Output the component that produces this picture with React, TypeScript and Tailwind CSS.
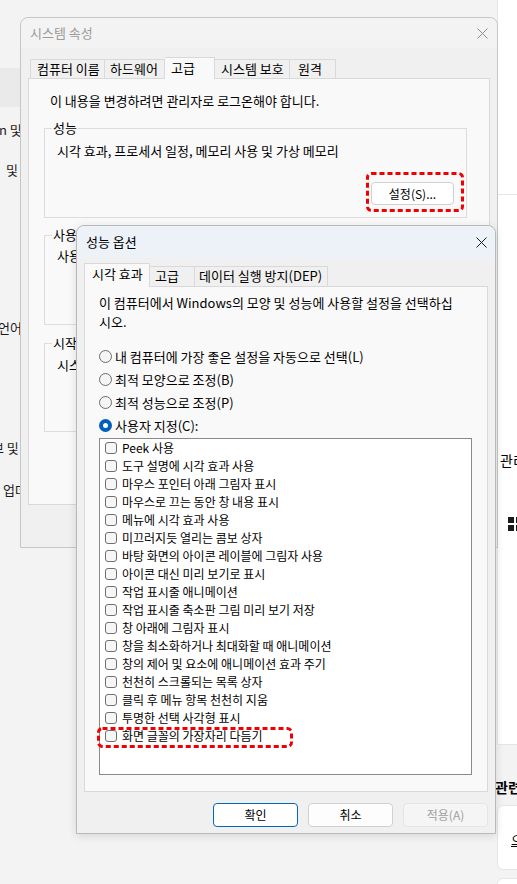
import React from 'react';

function CloseX({ color }: { color: string }) {
  return (
    <svg width="11" height="11" viewBox="0 0 11 11">
      <path d="M0.5 0.5L10.5 10.5M10.5 0.5L0.5 10.5" stroke={color} strokeWidth="1" fill="none" />
    </svg>
  );
}

function RedBox({ w, h }: { w: number; h: number }) {
  return (
    <svg width={w} height={h} viewBox={`0 0 ${w} ${h}`}>
      <rect x="1.5" y="1.5" width={w - 3} height={h - 3} rx="4" fill="none" stroke="#f00000" strokeWidth="3" strokeDasharray="5 3" />
    </svg>
  );
}

function Radio({ checked, label }: { checked?: boolean; label: string }) {
  return (
    <div className="h-[23px] flex items-center gap-[3px]">
      {checked ? (
        <span className="w-[13px] h-[13px] rounded-full bg-[#005fb8] flex items-center justify-center shrink-0">
          <span className="w-[5px] h-[5px] rounded-full bg-white" />
        </span>
      ) : (
        <span className="w-[13px] h-[13px] rounded-full border border-[#6d6d6d] bg-[#f5f5f5] shrink-0" />
      )}
      <span className="text-[13px] leading-[18px] whitespace-nowrap">{label}</span>
    </div>
  );
}

const ITEMS = [
  'Peek 사용',
  '도구 설명에 시각 효과 사용',
  '마우스 포인터 아래 그림자 표시',
  '마우스로 끄는 동안 창 내용 표시',
  '메뉴에 시각 효과 사용',
  '미끄러지듯 열리는 콤보 상자',
  '바탕 화면의 아이콘 레이블에 그림자 사용',
  '아이콘 대신 미리 보기로 표시',
  '작업 표시줄 애니메이션',
  '작업 표시줄 축소판 그림 미리 보기 저장',
  '창 아래에 그림자 표시',
  '창을 최소화하거나 최대화할 때 애니메이션',
  '창의 제어 및 요소에 애니메이션 효과 주기',
  '천천히 스크롤되는 목록 상자',
  '클릭 후 메뉴 항목 천천히 지움',
  '투명한 선택 사각형 표시',
  '화면 글꼴의 가장자리 다듬기',
];

function GroupBox({ label, h, pt, children }: { label: string; h: string; pt: string; children: React.ReactNode }) {
  return (
    <div className={`relative border border-[#dcdcdc] w-[423px] ${h} ${pt} pl-[12px] flex flex-col`}>
      <span className="absolute -top-[10px] left-[7px] px-[1px] bg-[#f9f9f9] text-[13px] leading-[18px] whitespace-nowrap">{label}</span>
      {children}
    </div>
  );
}

export default function App() {
  return (
    <div className="relative w-[517px] h-[884px] overflow-hidden bg-[#f3f3f3] text-black font-['Noto_Sans_CJK_KR',sans-serif]">
      {/* Settings app nav (background) */}
      <div className="absolute left-0 top-[68px] w-[30px] h-[39px] bg-[#eaeaea]" />
      <div className="absolute left-[-1px] top-[121px] text-[13px] leading-[18px] whitespace-nowrap text-[#1b1b1b]">n 및 장치</div>
      <div className="absolute left-[6px] top-[161px] text-[13px] leading-[18px] whitespace-nowrap text-[#1b1b1b]">및 인터넷</div>
      <div className="absolute left-[-23px] top-[199px] text-[13px] leading-[18px] whitespace-nowrap text-[#1b1b1b]">설정</div>
      <div className="absolute left-[-2px] top-[319px] text-[13px] leading-[18px] whitespace-nowrap text-[#1b1b1b]">언어</div>
      <div className="absolute left-[-8px] top-[439px] text-[13px] leading-[18px] whitespace-nowrap text-[#1b1b1b]">보 및 보안</div>
      <div className="absolute left-[-6px] top-[481px] text-[13px] leading-[18px] whitespace-nowrap text-[#1b1b1b]">s 업데이트</div>

      {/* Settings app right column (background) */}
      <div className="absolute left-[497px] top-0 w-[40px] h-[884px] flex flex-col">
        <div className="h-[195px] shrink-0 bg-white border-l border-b border-[#e6e6e6]" />
        <div className="h-[550px] shrink-0 bg-white border-l border-b border-[#e6e6e6] relative">
          <span className="absolute left-[2px] top-[256px] text-[14px] leading-[18px] whitespace-nowrap">관리</span>
          <svg className="absolute left-[10px] top-[322px]" width="14" height="14" viewBox="0 0 14 14">
            <rect x="0" y="0" width="6" height="6" fill="#1b1b1b" />
            <rect x="8" y="0" width="6" height="6" fill="#1b1b1b" />
            <rect x="0" y="8" width="6" height="6" fill="#1b1b1b" />
            <rect x="8" y="8" width="6" height="6" fill="#1b1b1b" />
          </svg>
        </div>
        <div className="h-[60px] shrink-0 relative">
          <span className="absolute left-[-2px] top-[33px] text-[14px] leading-[18px] font-semibold whitespace-nowrap">관련</span>
        </div>
        <div className="h-[65px] shrink-0 bg-white border border-[#e6e6e6] rounded-l-[6px] relative">
          <span className="absolute left-[13px] top-[25px] text-[13px] leading-[18px] underline whitespace-nowrap">으</span>
        </div>
        <div className="h-[8px] shrink-0" />
        <div className="h-[40px] shrink-0 bg-white border border-[#e6e6e6] rounded-l-[6px]" />
      </div>

      {/* System properties dialog (inactive) */}
      <div className="absolute left-[20px] top-[17px] w-[478px] h-[531px] z-10 bg-[#f0f0f0] border border-[#c6c6c6] rounded-t-[8px] flex flex-col">
        <div className="h-[30px] shrink-0 bg-[#f3f3f3] rounded-t-[8px] flex items-center justify-between pl-[9px] pr-[9px]">
          <span className="text-[13px] leading-[18px] text-[#9b9b9b]">시스템 속성</span>
          <CloseX color="#8c8c8c" />
        </div>
        <div className="px-[7px] pt-[9px] flex flex-col">
          <div className="flex items-end h-[21px] pl-[2px] relative z-[1]">
            <div className="w-[75px] h-[19px] border border-b-0 border-[#d9d9d9] bg-[#f0f0f0] text-[13px] leading-[18px] pl-[6px] whitespace-nowrap">컴퓨터 이름</div>
            <div className="w-[60px] h-[19px] border border-b-0 border-l-0 border-[#d9d9d9] bg-[#f0f0f0] text-[13px] leading-[18px] pl-[5px] whitespace-nowrap">하드웨어</div>
            <div className="w-[50px] h-[22px] -mb-[1px] border border-b-0 border-l-0 border-[#d9d9d9] bg-[#f9f9f9] text-[13px] leading-[18px] pl-[6px] pt-[1px]">고급</div>
            <div className="w-[75px] h-[19px] border border-b-0 border-l-0 border-[#d9d9d9] bg-[#f0f0f0] text-[13px] leading-[18px] pl-[6px] whitespace-nowrap">시스템 보호</div>
            <div className="w-[46px] h-[19px] border border-b-0 border-l-0 border-[#d9d9d9] bg-[#f0f0f0] text-[13px] leading-[18px] pl-[8px]">원격</div>
          </div>
          <div className="h-[427px] bg-[#f9f9f9] border border-[#d9d9d9] pt-[13px] pl-[15px] flex flex-col">
            <div className="text-[13px] leading-[18px] pl-[6px] whitespace-nowrap">이 내용을 변경하려면 관리자로 로그온해야 합니다.</div>
            <div className="mt-[18px]">
              <GroupBox label="성능" h="h-[90px]" pt="pt-[13px]">
                <div className="text-[13px] leading-[18px] whitespace-nowrap">시각 효과, 프로세서 일정, 메모리 사용 및 가상 메모리</div>
                <div className="self-end mr-[12px] mt-[22px] w-[83px] h-[23px] bg-white border border-[#d0d0d0] rounded-[4px] flex items-center justify-center text-[12px] leading-[18px]">설정(S)...</div>
              </GroupBox>
            </div>
            <div className="mt-[17px]">
              <GroupBox label="사용자 프로필" h="h-[90px]" pt="pt-[11px]">
                <div className="text-[13px] leading-[18px] whitespace-nowrap">사용자 로그인에 관련된 바탕 화면 설정</div>
              </GroupBox>
            </div>
            <div className="mt-[18px]">
              <GroupBox label="시작 및 복구" h="h-[89px]" pt="pt-[12px]">
                <div className="text-[13px] leading-[18px] whitespace-nowrap">시스템 시작, 시스템 오류 및 디버깅 정보</div>
              </GroupBox>
            </div>
          </div>
        </div>
      </div>

      <div className="absolute left-[366px] top-[172px] z-[15]">
        <RedBox w={98} h={40} />
      </div>

      {/* Performance options dialog (active) */}
      <div className="absolute left-[76px] top-[225px] w-[420px] h-[609px] z-20 bg-[#f0f0f0] border border-[#b9b9b9] rounded-t-[8px] shadow-[0_2px_10px_rgba(0,0,0,0.12)] flex flex-col">
        <div className="h-[32px] shrink-0 bg-[#edf2f9] rounded-t-[8px] flex items-center justify-between pl-[9px] pr-[8px]">
          <span className="text-[13px] leading-[18px]">성능 옵션</span>
          <CloseX color="#1a1a1a" />
        </div>
        <div className="px-[7px] pt-[5px] flex flex-col">
          <div className="flex items-end h-[23px] relative z-[1]">
            <div className="w-[66px] h-[24px] -mb-[1px] border border-b-0 border-[#d9d9d9] bg-[#f9f9f9] text-[13px] leading-[18px] pl-[7px] pt-[1px] whitespace-nowrap">시각 효과</div>
            <div className="w-[45px] h-[20px] border border-b-0 border-l-0 border-[#d9d9d9] bg-[#f0f0f0] text-[13px] leading-[18px] pl-[5px]">고급</div>
            <div className="w-[133px] h-[20px] border border-b-0 border-l-0 border-[#d9d9d9] bg-[#f0f0f0] text-[13px] leading-[18px] pl-[4px] whitespace-nowrap">데이터 실행 방지(DEP)</div>
          </div>
          <div className="h-[506px] bg-[#f9f9f9] border border-[#d9d9d9] pt-[6px] pl-[14px] flex flex-col">
            <div className="text-[13px] leading-[19px] whitespace-nowrap">
              이 컴퓨터에서 Windows의 모양 및 성능에 사용할 설정을 선택하십
              <br />
              시오.
            </div>
            <div className="mt-[14px] flex flex-col">
              <Radio label="내 컴퓨터에 가장 좋은 설정을 자동으로 선택(L)" />
              <Radio label="최적 모양으로 조정(B)" />
              <Radio label="최적 성능으로 조정(P)" />
              <Radio checked label="사용자 지정(C):" />
            </div>
            <div className="mt-[1px] w-[373px] h-[337px] bg-white border border-[#8a8a8a] flex flex-col">
              {ITEMS.map((t) => (
                <div key={t} className="h-[18px] shrink-0 flex items-center pl-[5px] gap-[5px]">
                  <span className="w-[12px] h-[12px] rounded-[3px] border border-[#6f6f6f] bg-[#f6f6f6] shrink-0" />
                  <span className="text-[12px] leading-[18px] whitespace-nowrap">{t}</span>
                </div>
              ))}
            </div>
          </div>
          <div className="mt-[11px] flex justify-end gap-[10px]">
            <div className="w-[85px] h-[24px] bg-white border border-[#0067c0] rounded-[4px] flex items-center justify-center text-[12px] leading-[18px]">확인</div>
            <div className="w-[85px] h-[24px] bg-[#fdfdfd] border border-[#d0d0d0] rounded-[4px] flex items-center justify-center text-[12px] leading-[18px]">취소</div>
            <div className="w-[85px] h-[24px] bg-[#f5f5f5] border border-[#e5e5e5] rounded-[4px] flex items-center justify-center text-[12px] leading-[18px] text-[#a0a0a0]">적용(A)</div>
          </div>
        </div>
      </div>

      <div className="absolute left-[97px] top-[727px] z-30">
        <RedBox w={196} h={21} />
      </div>
    </div>
  );
}
